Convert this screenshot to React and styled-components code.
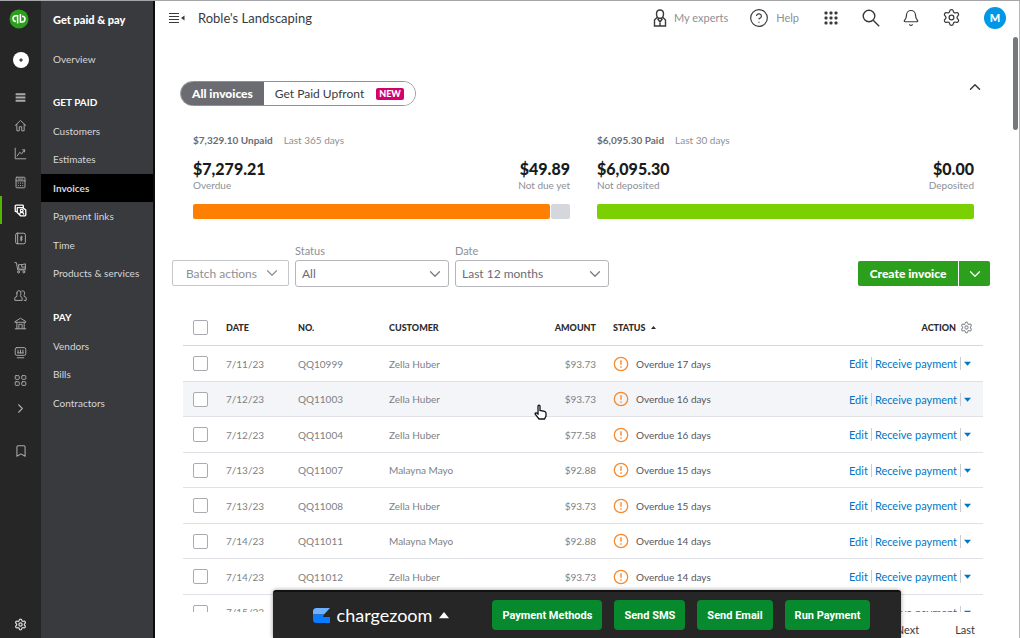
import React from 'react';
import styled, { createGlobalStyle } from 'styled-components';
import {
  Bell,
  Bookmark,
  ChevronDown,
  ChevronRight,
  ChevronUp,
  CircleHelp,
  Search,
  Settings,
} from 'lucide-react';

const GlobalStyle = createGlobalStyle`
  * {
    box-sizing: border-box;
  }

  body {
    margin: 0;
    color: #393a3d;
    background: #fff;
    font-family: Lato, "Liberation Sans", sans-serif;
    font-size: 11px;
  }

  button, select, input {
    margin: 0;
    font-family: inherit;
  }

  button {
    padding: 0;
    border: 0;
    background: none;
    cursor: pointer;
  }

  a {
    color: inherit;
    text-decoration: none;
  }

  svg {
    display: block;
    flex: none;
  }
`;

const Page = styled.div`
  display: grid;
  grid-template-columns: 41px 114px minmax(0, 1fr);
  height: 100vh;
  overflow: hidden;
  border-top: 1px solid #a5a6a8;
`;

/* left icon rail */

const Rail = styled.nav`
  display: flex;
  flex-direction: column;
  align-items: center;
  background: #262626;
  color: #a9aaac;
  padding: 8px 0 0;
`;

const Logo = styled.a`
  height: 20px;
  margin-right: 3px;
`;

const AddButton = styled.button`
  width: 16px;
  height: 16px;
  margin: 23px 0 15px;
  border-radius: 50%;
  background: #fff;
  color: #393a3d;
  display: grid;
  place-items: center;
`;

const RailList = styled.div`
  width: 100%;
  margin-bottom: 14px;
`;

const RailItem = styled.a`
  display: flex;
  align-items: center;
  justify-content: center;
  width: 100%;
  height: 28px;
  border-left: 2px solid ${(props) => (props.$active ? '#53b700' : 'transparent')};
  border-right: 2px solid transparent;
  color: ${(props) => (props.$active ? '#fff' : 'inherit')};

  &:nth-child(3n) {
    height: 29px;
  }
`;

const RailFooter = styled.div`
  width: 100%;
  margin-top: auto;
  color: #d8d9da;
`;

/* section menu */

const Side = styled.nav`
  background: #393a3d;
  border-right: 2px solid #0c0c0d;
  color: #d4d7dc;
  padding-top: 9px;
`;

const SideTitle = styled.h2`
  margin: 0 0 15px;
  padding-left: 12px;
  font-size: 11px;
  line-height: 20px;
  font-weight: 900;
  color: #fff;
`;

const SideHeading = styled.h3`
  margin: 19px 0 5px;
  padding-left: 12px;
  font-size: 10px;
  line-height: 20px;
  font-weight: 700;
  color: #fff;
`;

const SideItem = styled.a`
  display: block;
  height: 28px;
  padding-left: 12px;
  font-size: 10px;
  line-height: 28px;
  white-space: nowrap;
  font-weight: ${(props) => (props.$active ? 700 : 400)};
  background: ${(props) => (props.$active ? '#000' : 'none')};

  &:nth-child(even) {
    height: 29px;
  }
`;

/* main column */

const Main = styled.main`
  position: relative;
  display: flex;
  flex-direction: column;
  min-height: 0;
  border-right: 1px solid #b5b6b8;
`;

const TopBar = styled.header`
  display: flex;
  align-items: center;
  height: 33px;
  padding: 0 13px 0 14px;
  flex: none;
`;

const Company = styled.h1`
  margin: 0 auto 0 13px;
  font-size: 13px;
  line-height: 20px;
  font-weight: 400;
`;

const TopLinks = styled.div`
  display: flex;
  gap: 21px;
  margin-right: 12px;
`;

const TopLink = styled.button`
  display: flex;
  align-items: center;
  gap: 7px;
  font-size: 11px;
  color: #8d9096;

  svg {
    color: #393a3d;
  }
`;

const IconButton = styled.button`
  display: grid;
  place-items: center;
  width: 40px;
  height: 28px;
  color: #393a3d;
`;

const Avatar = styled.button`
  width: 22px;
  height: 22px;
  margin-left: 13px;
  border-radius: 50%;
  background: #0097e6;
  color: #fff;
  font-size: 11px;
  font-weight: 900;
`;

const ScrollThumb = styled.div`
  position: absolute;
  top: 36px;
  right: 1px;
  width: 5px;
  height: 93px;
  border-radius: 3px;
  background: #77787b;
`;

const TabRow = styled.div`
  display: flex;
  justify-content: space-between;
  align-items: flex-start;
  margin-top: 47px;
  padding: 0 24px 0 25px;
`;

const Tabs = styled.div`
  display: flex;
  height: 25px;
  border: 1px solid #8d9096;
  border-radius: 13px;
  overflow: hidden;
`;

const Tab = styled.button`
  display: flex;
  align-items: center;
  gap: 12px;
  padding: 0 11px;
  font-size: 12px;
  font-weight: ${(props) => (props.$active ? 900 : 400)};
  color: ${(props) => (props.$active ? '#fff' : '#393a3d')};
  background: ${(props) => (props.$active ? '#6b6c72' : '#fff')};
`;

const Badge = styled.span`
  padding: 0 3px;
  border-radius: 2px;
  background: #d4006f;
  color: #fff;
  font-size: 9px;
  line-height: 12px;
  font-weight: 900;
`;

const Collapse = styled.button`
  width: 40px;
  height: 12px;
  display: grid;
  place-content: center;
  color: #393a3d;
`;

const Summary = styled.section`
  display: grid;
  grid-template-columns: 1fr 1fr;
  gap: 27px;
  margin-top: 26px;
  padding: 0 45px 0 38px;
`;

const Period = styled.p`
  margin: 0 0 12px;
  font-size: 10px;
  line-height: 16px;
  color: #8d9096;

  strong {
    margin-right: 11px;
    font-weight: 700;
    color: #6b6c72;
  }
`;

const Totals = styled.div`
  display: flex;
  justify-content: space-between;
`;

const Total = styled.div`
  font-size: 10px;
  line-height: 14px;
  color: #8d9096;
  text-align: ${(props) => (props.$right ? 'right' : 'left')};

  strong {
    display: block;
    font-size: 16px;
    line-height: 18px;
    font-weight: 900;
    color: #1b1b1d;
  }
`;

const Bar = styled.div`
  display: flex;
  gap: 1px;
  height: 15px;
  margin-top: 12px;
`;

const BarPart = styled.div`
  flex: ${(props) => props.$share};
  border-radius: 2px;
  background: ${(props) => props.$color};
`;

const Toolbar = styled.div`
  display: flex;
  align-items: flex-end;
  gap: 6px;
  margin-top: 25px;
  padding: 0 29px 0 17px;
`;

const BatchButton = styled.button`
  display: flex;
  align-items: center;
  justify-content: flex-end;
  gap: 6px;
  width: 117px;
  height: 26px;
  margin-bottom: 1px;
  padding-right: 7px;
  border: 1px solid #c4c6ca;
  border-radius: 2px;
  font-size: 12px;
  color: #8d9096;
`;

const Field = styled.div`
  display: grid;
  width: 154px;

  label {
    line-height: 14px;
    margin-bottom: 2px;
    font-size: 11px;
    color: #8d9096;
  }

  select, svg {
    grid-area: 2 / 1;
  }

  svg {
    place-self: center end;
    margin-right: 5px;
    color: #77787d;
    pointer-events: none;
  }
`;

const Select = styled.select`
  appearance: none;
  height: 27px;
  padding: 0 6px;
  border: 1px solid #b4b6ba;
  border-radius: 3px;
  background: #fff;
  font-size: 12px;
  color: #6b6c72;
`;

const CreateGroup = styled.div`
  display: flex;
  gap: 1px;
  margin-left: auto;
  margin-bottom: 1px;
`;

const CreateButton = styled.button`
  display: grid;
  place-items: center;
  width: ${(props) => (props.$small ? '31px' : '100px')};
  height: 25px;
  border-radius: ${(props) => (props.$small ? '0 2px 2px 0' : '2px 0 0 2px')};
  background: #2ca01c;
  color: #fff;
  font-size: 12px;
  font-weight: 900;
`;

const TableArea = styled.div`
  flex: 1;
  min-height: 0;
  overflow: hidden;
  margin: 23px 36px 0 28px;
`;

const Table = styled.table`
  width: 100%;
  table-layout: fixed;
  border-collapse: separate;
  border-spacing: 0;
`;

const Col = styled.col`
  width: ${(props) => props.$width};
`;

const Row = styled.tr`
  height: 35px;
  background: ${(props) => (props.$hover ? '#f4f5f8' : 'none')};

  &:nth-child(odd) {
    height: 36px;
  }
`;

const Cell = styled.td`
  padding: 0 ${(props) => (props.$action ? '10px' : '0')} 0 ${(props) => props.$left || '0'};
  border-bottom: 1px solid #dfe1e6;
  text-align: ${(props) => (props.$right ? 'right' : 'left')};
  font-size: 10px;
  white-space: nowrap;
  color: #7d7f85;
`;

const HeadCell = styled(Cell).attrs({ as: 'th', scope: 'col' })`
  border-bottom-color: #d4d7dc;
  font-size: 9px;
  font-weight: 900;
  color: #2b2c2f;
`;

const Checkbox = styled.input.attrs({ type: 'checkbox' })`
  appearance: none;
  display: block;
  width: 15px;
  height: 15px;
  border: 1px solid #a9abb0;
  border-radius: 2px;
  background: #fff;
`;

const Status = styled.div`
  display: flex;
  align-items: center;
  gap: 7px;
  color: #55565b;
`;

const SortLabel = styled.div`
  display: flex;
  align-items: center;
  gap: 5px;
`;

const Actions = styled.div`
  display: flex;
  align-items: center;
  justify-content: flex-end;
  font-size: 11px;
  color: #0077c5;

  a + a {
    margin: 0 3px;
    padding-left: 3px;
    border-left: 1px solid #c9ccd1;
  }

  button {
    padding: 3px 2px 3px 3px;
    border-left: 1px solid #c9ccd1;
    color: #0077c5;
  }
`;

const HeadAction = styled.div`
  display: flex;
  align-items: center;
  justify-content: flex-end;
  gap: 4px;

  button {
    color: #8d9096;
  }
`;

const Pager = styled.div`
  display: flex;
  justify-content: flex-end;
  gap: 36px;
  height: 26px;
  padding: 10px 44px 0 0;
  font-size: 11px;
  line-height: 16px;
`;

/* payment dock over the bottom edge */

const DockArea = styled.div`
  position: absolute;
  left: 0;
  right: 0;
  bottom: 0;
  display: flex;
  justify-content: center;
`;

const Dock = styled.aside`
  display: flex;
  align-items: center;
  gap: 12px;
  height: 48px;
  padding: 0 31px 0 40px;
  border-top: 2px solid #111;
  border-radius: 3px 3px 0 0;
  background: #262626;
  box-shadow: 0 0 4px rgba(0, 0, 0, 0.4);
`;

const Brand = styled.button`
  display: flex;
  align-items: center;
  gap: 7px;
  margin-right: 31px;
  color: #fff;
  font-size: 18px;
  line-height: 24px;
  font-weight: 400;
`;

const DockButton = styled.button`
  height: 30px;
  padding: 0 10px;
  border-radius: 4px;
  background: #078a2d;
  color: #fff;
  font-family: Roboto, "Liberation Sans", sans-serif;
  font-size: 11px;
  font-weight: 700;
`;

const Cursor = styled.svg`
  position: absolute;
  left: 379px;
  top: 403px;
`;

const Glyph = ({ children, size = 13, width = 1.2 }) => (
  <svg
    width={size}
    height={size}
    viewBox="0 0 16 16"
    fill="none"
    stroke="currentColor"
    strokeWidth={width}
    strokeLinecap="round"
    strokeLinejoin="round"
    aria-hidden="true"
  >
    {children}
  </svg>
);

const Caret = ({ up, size = 7 }) => (
  <svg width={size} height={size} viewBox="0 0 8 8" fill="currentColor" aria-hidden="true">
    <path d={up ? 'M0 6.500 4 1.500 8 6.500z' : 'M0 2h8L4 6.500z'} />
  </svg>
);

const AlertIcon = () => (
  <svg width="16" height="16" viewBox="0 0 16 16" fill="none" stroke="#f78a2d" aria-hidden="true">
    <circle cx="8" cy="8" r="6.700" strokeWidth="1.300" />
    <path d="M8 4.300v4.400M8 10.300v1.400" strokeWidth="1.400" />
  </svg>
);

const Chevron = () => <ChevronDown size={18} strokeWidth={1.6} />;

const railItems = [
  {
    name: 'Menu',
    icon: <path d="M2 4h12M2 8h12M2 12h12" strokeWidth="2.200" strokeLinecap="butt" />,
  },
  {
    name: 'Home',
    icon: <path d="M1.500 8 8 1.800 14.500 8M3.500 6.500v8h3V9.500h3v5h3v-8" />,
  },
  {
    name: 'Reports',
    icon: <path d="M1.500 1.500v13h13M4 11l3-4.500 2.500 2L13 3.500M10.500 3.500H13V6" />,
  },
  {
    name: 'Accounting',
    icon: <><rect x="2.500" y="1.500" width="11" height="13" rx="1" /><path d="M2.500 6h11M5 3.800h6M5.200 8.800h.3M7.900 8.800h.3M10.600 8.800h.3M5.200 11.800h.3M7.900 11.800h.3M10.600 11.800h.3" /></>,
  },
  {
    name: 'Sales',
    active: true,
    icon: <><path d="M4 9.500H2.500a1 1 0 0 1-1-1v-6a1 1 0 0 1 1-1h8a1 1 0 0 1 1 1V4M4 4.500h7l3.500 3v6a1 1 0 0 1-1 1H8L4 10.500z" strokeWidth="1.600" /><circle cx="9.500" cy="8" r="1.700" strokeWidth="1.500" /><path d="M7 12.500c.5-3 4.500-3 5 0" strokeWidth="1.500" /></>,
  },
  {
    name: 'Expenses',
    icon: <><rect x="2" y="1.500" width="12" height="13" rx="2" /><path d="M4.500 1.500v13" /><path d="M9 5v6M10.300 6.300H8.500a.9.9 0 0 0 0 1.700h1a.9.9 0 0 1 0 1.700H7.700" /></>,
  },
  {
    name: 'Vendors',
    icon: <><path d="M1 2h2l1.500 9H14M6 9.500 5.500 4.500h4v3h4.500v2zM9.500 4.500 14 3.500v4" /><circle cx="5.500" cy="13.500" r="1.200" /><circle cx="12" cy="13.500" r="1.200" /></>,
  },
  {
    name: 'Customers',
    icon: <><path d="M3.500 5a2.500 3 0 0 1 5 0c0 2-.7 2.800-.7 4l2.200 1.500v3.500h-9v-3.500l2.700-1.500c0-1.200-.2-2-.2-4zM9.500 2.500c2-1 3.500.5 3.500 2.500 0 2-.7 2.500-.7 4l2.700 1.500v3.500h-2.500" /></>,
  },
  {
    name: 'Banking',
    icon: <><path d="M1.500 5.500 8 1.500l6.500 4v1h-13zM1.500 14.500h13M3.500 6.500v8M6 14V9h4v5M12.500 6.500v8" /></>,
  },
  {
    name: 'Payroll',
    icon: <><rect x="1.500" y="2" width="13" height="9.500" rx="2" /><path d="M4 14.500h8M5 5v3.500M8 5v3.500M11 5v3.500M4.500 8.500h7" /></>,
  },
  {
    name: 'Apps',
    icon: <><rect x="1.500" y="2" width="5" height="4.500" rx="1" /><rect x="9.500" y="2" width="5" height="4.500" rx="1" /><rect x="1.500" y="9.500" width="5" height="4.500" rx="1" /><rect x="9.500" y="9.500" width="5" height="4.500" rx="1" /></>,
  },
];

const getPaid = ['Customers', 'Estimates', 'Invoices', 'Payment links', 'Time', 'Products & services'];
const pay = ['Vendors', 'Bills', 'Contractors'];

const invoices = [
  { date: '7/11/23', no: 'QQ10999', customer: 'Zella Huber', amount: '$93.73', days: 17 },
  { date: '7/12/23', no: 'QQ11003', customer: 'Zella Huber', amount: '$93.73', days: 16, hover: true },
  { date: '7/12/23', no: 'QQ11004', customer: 'Zella Huber', amount: '$77.58', days: 16 },
  { date: '7/13/23', no: 'QQ11007', customer: 'Malayna Mayo', amount: '$92.88', days: 15 },
  { date: '7/13/23', no: 'QQ11008', customer: 'Zella Huber', amount: '$93.73', days: 15 },
  { date: '7/14/23', no: 'QQ11011', customer: 'Malayna Mayo', amount: '$92.88', days: 14 },
  { date: '7/14/23', no: 'QQ11012', customer: 'Zella Huber', amount: '$93.73', days: 14 },
  { date: '7/15/23', no: 'QQ11015', customer: 'Malayna Mayo', amount: '$92.88', days: 13 },
];

const IconRail = () => (
  <Rail aria-label="Main">
    <Logo href="#" aria-label="QuickBooks">
      <svg width="20" height="20" viewBox="0 0 20 20" fill="none">
        <circle cx="10" cy="10" r="9.500" fill="#2ca01c" />
        <path
          d="M8.600 14.500V6.700H6.900a2.900 2.900 0 0 0 0 5.800M11.400 5v8h1.700a2.900 2.900 0 0 0 0-5.800"
          stroke="#fff"
          strokeWidth="1.500"
        />
      </svg>
    </Logo>
    <AddButton aria-label="New">
      <Glyph size={6} width={4}><path d="M8 5v6M5 8h6" /></Glyph>
    </AddButton>
    <RailList>
      {railItems.map((item) => (
        <RailItem key={item.name} href="#" aria-label={item.name} $active={item.active}>
          <Glyph>{item.icon}</Glyph>
        </RailItem>
      ))}
      <RailItem href="#" aria-label="More"><ChevronRight size={15} strokeWidth={1.8} /></RailItem>
    </RailList>
    <RailItem href="#" aria-label="Bookmarks"><Bookmark size={14} strokeWidth={1.8} /></RailItem>
    <RailFooter>
      <RailItem as="button" aria-label="Menu settings">
        <Settings size={13} strokeWidth={2.4} />
      </RailItem>
    </RailFooter>
  </Rail>
);

const SideMenu = () => (
  <Side aria-label="Get paid and pay">
    <SideTitle>Get paid &amp; pay</SideTitle>
    <div><SideItem href="#">Overview</SideItem></div>
    <SideHeading>GET PAID</SideHeading>
    <div>
      {getPaid.map((name) => (
        <SideItem key={name} href="#" $active={name === 'Invoices'}>{name}</SideItem>
      ))}
    </div>
    <SideHeading>PAY</SideHeading>
    <div>
      {pay.map((name) => <SideItem key={name} href="#">{name}</SideItem>)}
    </div>
  </Side>
);

const Header = () => (
  <TopBar>
    <button aria-label="Toggle menu">
      <svg width="16" height="12" viewBox="0 0 16 12" stroke="#393a3d" fill="#393a3d">
        <path d="M0 1.500h10M0 4.500h10M0 7.500h10M0 10.500h10" />
        <path d="M15.500 3.500v5l-3.500-2.500z" stroke="none" />
      </svg>
    </button>
    <Company>Roble's Landscaping</Company>
    <TopLinks>
      <TopLink>
        <svg width="14" height="18" viewBox="0 0 14 18" fill="none" stroke="currentColor" strokeWidth="1.400">
          <path d="M7 1c2.400 0 3.500 1.700 3.500 3.900S9.300 9.200 7 9.200 3.500 7.100 3.500 4.900 4.600 1 7 1zM4 8.500 1.500 11v6h11v-6L10 8.500M4.500 9.500 7 13l2.500-3.500M7 12.500V17" />
        </svg>
        My experts
      </TopLink>
      <TopLink><CircleHelp size={20} strokeWidth={1.4} />Help</TopLink>
    </TopLinks>
    <IconButton aria-label="Apps">
      <svg width="14" height="14" viewBox="0 0 14 14" fill="currentColor">
        {[0, 5, 10].map((y) => [0, 5, 10].map((x) => (
          <rect key={`${x}-${y}`} x={x + 0.5} y={y + 0.5} width="3" height="3" rx="1" />
        )))}
      </svg>
    </IconButton>
    <IconButton aria-label="Search">
      <svg width="18" height="18" viewBox="0 0 18 18" fill="none" stroke="currentColor" strokeWidth="1.400">
        <circle cx="7" cy="7" r="5.800" />
        <path d="m11.200 11.200 6 6" />
      </svg>
    </IconButton>
    <IconButton aria-label="Notifications"><Bell size={18} strokeWidth={1.6} /></IconButton>
    <IconButton aria-label="Settings"><Settings size={19} strokeWidth={1.6} /></IconButton>
    <Avatar aria-label="Account">M</Avatar>
  </TopBar>
);

const Filters = () => (
  <Toolbar>
    <BatchButton>Batch actions <Chevron /></BatchButton>
    <Field>
      <label htmlFor="status">Status</label>
      <Select id="status" defaultValue="All"><option>All</option></Select>
      <Chevron />
    </Field>
    <Field>
      <label htmlFor="date">Date</label>
      <Select id="date" defaultValue="Last 12 months"><option>Last 12 months</option></Select>
      <Chevron />
    </Field>
    <CreateGroup>
      <CreateButton>Create invoice</CreateButton>
      <CreateButton $small aria-label="More create options"><Chevron /></CreateButton>
    </CreateGroup>
  </Toolbar>
);

const InvoiceTable = () => (
  <TableArea>
    <Table>
      <colgroup>
        <Col $width="43px" />
        <Col $width="72px" />
        <Col $width="91px" />
        <Col $width="140px" />
        <Col $width="67px" />
        <Col />
        <Col $width="160px" />
      </colgroup>
      <thead>
        <Row>
          <HeadCell $left="10px"><Checkbox aria-label="Select all" /></HeadCell>
          <HeadCell>DATE</HeadCell>
          <HeadCell>NO.</HeadCell>
          <HeadCell>CUSTOMER</HeadCell>
          <HeadCell $right>AMOUNT</HeadCell>
          <HeadCell $left="17px"><SortLabel>STATUS <Caret up size={5} /></SortLabel></HeadCell>
          <HeadCell $action>
            <HeadAction>
              ACTION
              <button aria-label="Table settings"><Settings size={13} strokeWidth={2} /></button>
            </HeadAction>
          </HeadCell>
        </Row>
      </thead>
      <tbody>
        {invoices.map((item) => (
          <Row key={item.no} $hover={item.hover}>
            <Cell $left="10px"><Checkbox aria-label={`Select ${item.no}`} /></Cell>
            <Cell>{item.date}</Cell>
            <Cell>{item.no}</Cell>
            <Cell>{item.customer}</Cell>
            <Cell $right>{item.amount}</Cell>
            <Cell $left="17px"><Status><AlertIcon />Overdue {item.days} days</Status></Cell>
            <Cell $action>
              <Actions>
                <a href="#">Edit</a>
                <a href="#">Receive payment</a>
                <button aria-label="More actions"><Caret /></button>
              </Actions>
            </Cell>
          </Row>
        ))}
      </tbody>
    </Table>
  </TableArea>
);

const PaymentDock = () => (
  <DockArea>
    <Dock>
      <Brand>
        <svg width="17" height="17" viewBox="0 0 17 17">
          <path d="M3.500 1H17l-6 6.500H0V4.500A3.500 3.500 0 0 1 3.500 1z" fill="#6cb2ff" />
          <path d="M0 7.500h11L10 10h7v6H3.500A3.500 3.500 0 0 1 0 12.500z" fill="#0a7bff" />
        </svg>
        chargezoom
        <Caret up size={10} />
      </Brand>
      <DockButton>Payment Methods</DockButton>
      <DockButton>Send SMS</DockButton>
      <DockButton>Send Email</DockButton>
      <DockButton>Run Payment</DockButton>
    </Dock>
  </DockArea>
);

const App = () => (
  <>
    <GlobalStyle />
    <Page>
      <IconRail />
      <SideMenu />
      <Main>
        <Header />
        <TabRow>
          <Tabs>
            <Tab $active>All invoices</Tab>
            <Tab>Get Paid Upfront <Badge>NEW</Badge></Tab>
          </Tabs>
          <Collapse aria-label="Collapse summary"><ChevronUp size={18} strokeWidth={2} /></Collapse>
        </TabRow>
        <Summary>
          <div>
            <Period><strong>$7,329.10 Unpaid</strong>Last 365 days</Period>
            <Totals>
              <Total><strong>$7,279.21</strong>Overdue</Total>
              <Total $right><strong>$49.89</strong>Not due yet</Total>
            </Totals>
            <Bar>
              <BarPart $share={95} $color="#ff8000" />
              <BarPart $share={5} $color="#d4d7dc" />
            </Bar>
          </div>
          <div>
            <Period><strong>$6,095.30 Paid</strong>Last 30 days</Period>
            <Totals>
              <Total><strong>$6,095.30</strong>Not deposited</Total>
              <Total $right><strong>$0.00</strong>Deposited</Total>
            </Totals>
            <Bar><BarPart $share={1} $color="#7ad000" /></Bar>
          </div>
        </Summary>
        <Filters />
        <InvoiceTable />
        <Pager>
          <a href="#">Next</a>
          <a href="#">Last</a>
        </Pager>
        <PaymentDock />
        <ScrollThumb />
        <Cursor width="13" height="16" viewBox="0 0 13 16" fill="#fff" stroke="#111" strokeWidth="1.300">
          <path d="M4 9V2.200a1 1 0 0 1 2 0V6.500l4.500.8q1.500.4 1.500 2V12l-1.500 3H5L1 9.800Q1.500 8 4 10z" />
        </Cursor>
      </Main>
    </Page>
  </>
);

export default App;
